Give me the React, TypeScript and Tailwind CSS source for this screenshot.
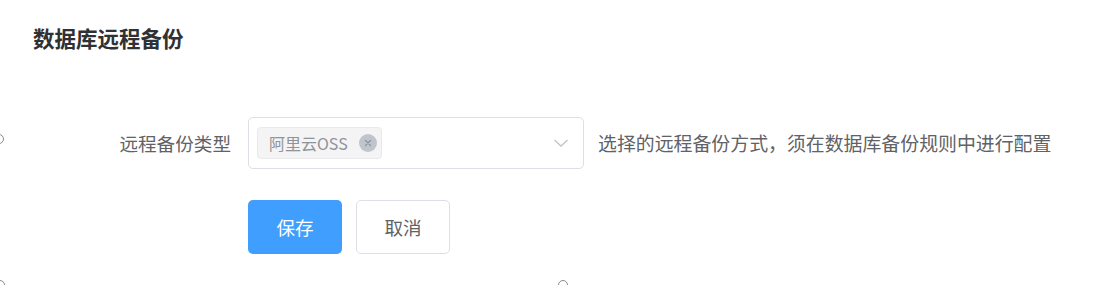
import React from "react";

export default function App() {
  return (
    <div
      className="relative w-[1117px] h-[285px] overflow-hidden bg-white"
      style={{ fontFamily: '"Noto Sans CJK SC", "Noto Sans", sans-serif' }}
    >
      <div className="pl-[33px] pt-[22px]">
        <h3 className="text-[21.5px] leading-[32px] font-bold text-[#303133]">数据库远程备份</h3>
      </div>

      <div className="mt-[63px] flex items-center">
        <div className="w-[231px] text-right text-[18.6px] leading-[52px] text-[#606266]">远程备份类型</div>
        <div className="ml-[17px] flex h-[52px] w-[336px] items-center rounded-[5px] border border-[#dcdfe6] pl-[8px] pr-[14px]">
          <div className="flex h-[32px] items-center rounded-[4px] border border-[#e9e9eb] bg-[#f4f4f5] pl-[11px] pr-[4px]">
            <span className="text-[16px] leading-[20px] text-[#909399]">阿里云OSS</span>
            <span className="ml-[11px] flex h-[18px] w-[18px] items-center justify-center rounded-full bg-[#c0c4cc]">
              <svg width="10" height="10" viewBox="0 0 10 10">
                <path d="M2.5 2.5 L7.5 7.5 M7.5 2.5 L2.5 7.5" stroke="#909399" strokeWidth="1.3" strokeLinecap="round" />
              </svg>
            </span>
          </div>
          <div className="flex-1" />
          <svg width="16" height="10" viewBox="0 0 16 10">
            <path d="M1.5 2 L8 8 L14.5 2" fill="none" stroke="#c0c4cc" strokeWidth="1.3" />
          </svg>
        </div>
        <div className="ml-[14px] text-[18.9px] leading-[26px] text-[#606266]">
          选择的远程备份方式，须在数据库备份规则中进行配置
        </div>
      </div>

      <div className="mt-[31px] ml-[248px] flex gap-[14px]">
        <button className="h-[54px] w-[94px] rounded-[5px] bg-[#409eff] text-[18.6px] text-white">保存</button>
        <button className="h-[54px] w-[94px] rounded-[5px] border border-[#dcdfe6] bg-white text-[18.6px] text-[#606266]">
          取消
        </button>
      </div>

      <div className="absolute left-[-6px] top-[134px] h-[10px] w-[10px] rounded-full border border-[#8a8a8a] bg-white" />
      <div className="absolute left-[-5px] top-[280px] h-[10px] w-[10px] rounded-full border border-[#8a8a8a] bg-white" />
      <div className="absolute left-[558px] top-[280px] h-[10px] w-[10px] rounded-full border border-[#8a8a8a] bg-white" />
    </div>
  );
}
